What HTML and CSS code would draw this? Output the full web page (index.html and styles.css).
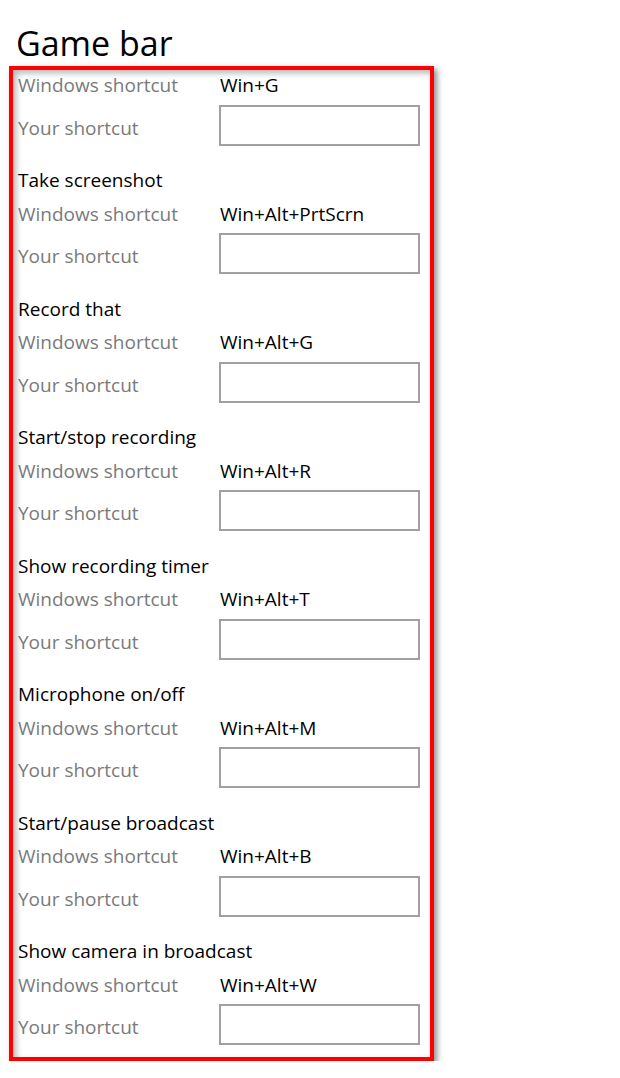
FILE: index.html
```html
<!DOCTYPE html>
<html lang="en">
<head>
    <meta charset="UTF-8">
    <meta name="viewport" content="width=device-width, initial-scale=1.0">
    <title>Game bar</title>
    <link rel="stylesheet" href="styles.css">
</head>
<body>
    <h1 class="title">Game bar</h1>
    <div class="panel">
        <div class="section first">
            <div class="row">
                <span class="label">Windows shortcut</span>
                <span class="keys">Win+G</span>
            </div>
            <div class="row custom">
                <span class="label">Your shortcut</span>
                <input class="field" type="text">
            </div>
        </div>
        <div class="section">
            <div class="name">Take screenshot</div>
            <div class="row">
                <span class="label">Windows shortcut</span>
                <span class="keys">Win+Alt+PrtScrn</span>
            </div>
            <div class="row custom">
                <span class="label">Your shortcut</span>
                <input class="field" type="text">
            </div>
        </div>
        <div class="section">
            <div class="name">Record that</div>
            <div class="row">
                <span class="label">Windows shortcut</span>
                <span class="keys">Win+Alt+G</span>
            </div>
            <div class="row custom">
                <span class="label">Your shortcut</span>
                <input class="field" type="text">
            </div>
        </div>
        <div class="section">
            <div class="name">Start/stop recording</div>
            <div class="row">
                <span class="label">Windows shortcut</span>
                <span class="keys">Win+Alt+R</span>
            </div>
            <div class="row custom">
                <span class="label">Your shortcut</span>
                <input class="field" type="text">
            </div>
        </div>
        <div class="section">
            <div class="name">Show recording timer</div>
            <div class="row">
                <span class="label">Windows shortcut</span>
                <span class="keys">Win+Alt+T</span>
            </div>
            <div class="row custom">
                <span class="label">Your shortcut</span>
                <input class="field" type="text">
            </div>
        </div>
        <div class="section">
            <div class="name">Microphone on/off</div>
            <div class="row">
                <span class="label">Windows shortcut</span>
                <span class="keys">Win+Alt+M</span>
            </div>
            <div class="row custom">
                <span class="label">Your shortcut</span>
                <input class="field" type="text">
            </div>
        </div>
        <div class="section">
            <div class="name">Start/pause broadcast</div>
            <div class="row">
                <span class="label">Windows shortcut</span>
                <span class="keys">Win+Alt+B</span>
            </div>
            <div class="row custom">
                <span class="label">Your shortcut</span>
                <input class="field" type="text">
            </div>
        </div>
        <div class="section">
            <div class="name">Show camera in broadcast</div>
            <div class="row">
                <span class="label">Windows shortcut</span>
                <span class="keys">Win+Alt+W</span>
            </div>
            <div class="row custom">
                <span class="label">Your shortcut</span>
                <input class="field" type="text">
            </div>
        </div>
    </div>
</body>
</html>
```

FILE: styles.css
```css
body {
    margin: 0;
    background: #fff;
    font-family: "Open Sans", "Noto Sans", sans-serif;
    color: #000;
}
.title {
    margin: 0;
    padding: 20px 0 0 16px;
    height: 46px;
    font-size: 34px;
    font-weight: 400;
    line-height: 46px;
}
.panel {
    margin-left: 9px;
    width: 412px;
    border: 4px solid #f00;
    padding: 0 0 12px 5px;
    box-sizing: content-box;
    box-shadow: 3px 3px 6px rgba(0, 0, 0, 0.45), inset 3px 3px 6px rgba(0, 0, 0, 0.3);
}
.section {
    margin-bottom: 18.5px;
}
.section:last-child {
    margin-bottom: 0;
}
.first {
    margin-top: -1.5px;
}
.name {
    font-size: 19px;
    line-height: 33px;
}
.row {
    display: grid;
    grid-template-columns: 201px 201px;
    align-items: center;
    height: 33px;
    font-size: 19px;
}
.row.custom {
    height: 41px;
    margin-top: 3px;
}
.custom .label {
    padding-top: 5px;
}
.label {
    color: #7a7a7a;
}
.keys {
    padding-left: 1px;
}
.field {
    box-sizing: border-box;
    width: 201px;
    height: 41px;
    margin: 0;
    border: 2px solid #a0a0a0;
    background: #fff;
    font: inherit;
}
```
